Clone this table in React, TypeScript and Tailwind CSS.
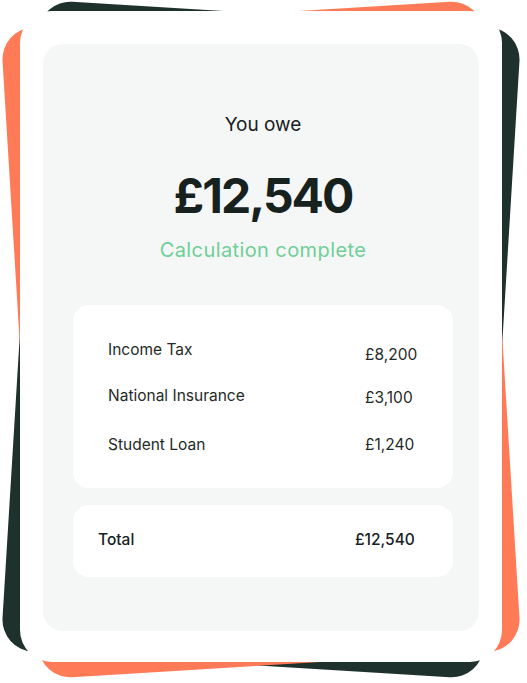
import React from "react";

const rows = [
  { label: "Income Tax", value: "£8,200", rowCls: "", valCls: "mt-[5px]" },
  { label: "National Insurance", value: "£3,100", rowCls: "mt-[17px]", valCls: "mt-[2px]" },
  { label: "Student Loan", value: "£1,240", rowCls: "mt-[23px]", valCls: "" },
];

export default function App() {
  return (
    <div
      className="w-[527px] h-[683px] bg-white pt-[11px] pl-[20px] overflow-hidden"
      style={{ fontFamily: "Inter, 'Noto Sans', sans-serif" }}
    >
      <div className="relative w-[482px] h-[651px]">
        <div className="absolute inset-0 rounded-[32px] bg-[#1e312d] translate-y-[3px] rotate-[3.5deg]" />
        <div className="absolute inset-0 rounded-[32px] bg-[#ff7b57] translate-y-[3px] -rotate-[3.5deg]" />
        <div className="relative h-full rounded-[32px] bg-white pl-[23px] pr-[23px] pt-[33px] pb-[31px]">
          <div className="h-full rounded-[20px] bg-[#f5f7f6] pl-[30px] pr-[26px] pt-[71px] flex flex-col">
            <div className="text-center text-[19px] leading-[19px] text-[#17211e]">You owe</div>
            <div className="mt-[38px] text-center text-[48px] leading-[48px] font-bold tracking-[-2px] text-[#17211e]">
              £12,540
            </div>
            <div className="mt-[20px] text-center text-[20px] leading-[20px] tracking-[0.4px] text-[#6fcf97]">
              Calculation complete
            </div>
            <div className="mt-[45px] h-[183px] rounded-[16px] bg-white pt-[33px] pl-[35px] flex flex-col">
              {rows.map((r) => (
                <div key={r.label} className={`flex items-start ${r.rowCls}`}>
                  <div className="w-[257px] text-[15.5px] leading-6 text-[#1f2a27]">{r.label}</div>
                  <div className={`text-[15.5px] leading-6 text-[#1f2a27] ${r.valCls}`}>{r.value}</div>
                </div>
              ))}
            </div>
            <div className="mt-[17px] h-[72px] rounded-[16px] bg-white pl-[25px] pt-[23px] flex items-start">
              <div className="w-[257px] text-[15.5px] leading-6 font-medium text-[#17211e]">Total</div>
              <div className="text-[15.5px] leading-6 font-medium text-[#17211e]">£12,540</div>
            </div>
          </div>
        </div>
      </div>
    </div>
  );
}
